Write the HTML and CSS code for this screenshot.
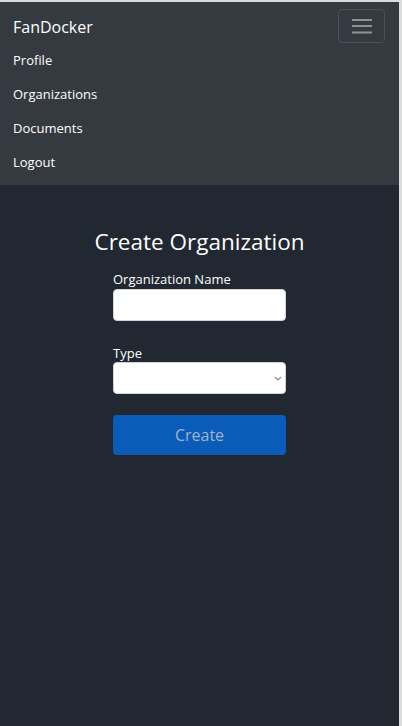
FILE: index.html
```html
<!DOCTYPE html>
<html lang="en">
<head>
<meta charset="utf-8">
<title>FanDocker</title>
<link rel="stylesheet" href="styles.css">
</head>
<body>
<div class="frame">
  <nav class="navbar">
    <div class="nav-top">
      <a class="brand" href="#">FanDocker</a>
      <button class="toggler" type="button" aria-label="Toggle navigation">
        <svg width="22" height="16" viewBox="0 0 22 16"><g stroke="#8e9297" stroke-width="2"><line x1="1" y1="2" x2="21" y2="2"/><line x1="1" y1="8" x2="21" y2="8"/><line x1="1" y1="14.5" x2="21" y2="14.5"/></g></svg>
      </button>
    </div>
    <ul class="nav-links">
      <li><a href="#">Profile</a></li>
      <li><a href="#">Organizations</a></li>
      <li><a href="#">Documents</a></li>
      <li><a href="#">Logout</a></li>
    </ul>
  </nav>
  <main class="content">
    <h1 class="title">Create Organization</h1>
    <form class="form">
      <label class="label" for="orgname">Organization Name</label>
      <input class="field" id="orgname" type="text">
      <label class="label label-type" for="type">Type</label>
      <div class="select-wrap">
        <select class="field select" id="type"><option></option></select>
        <svg class="chev" width="8" height="5" viewBox="0 0 8 5"><path d="M1 1l3 3 3-3" fill="none" stroke="#8a8a8a" stroke-width="1.2"/></svg>
      </div>
      <button class="btn" type="button" disabled>Create</button>
    </form>
  </main>
</div>
</body>
</html>
```
FILE: styles.css
```css
html, body {
  margin: 0;
  padding: 0;
  height: 100%;
}
body {
  font-family: "Open Sans", "Noto Sans", sans-serif;
  background: #212831;
}
.frame {
  box-sizing: border-box;
  min-height: 100%;
  border-top: 2px solid #dcdcdc;
  border-right: 3px solid #dcdcdc;
  background: #212831;
  display: flex;
  flex-direction: column;
}
.navbar {
  background: #343a40;
  padding: 7px 14px 6px 13px;
}
.nav-top {
  display: flex;
  justify-content: space-between;
  align-items: center;
  height: 34px;
}
.brand {
  color: #fff;
  text-decoration: none;
  font-size: 16px;
  line-height: 34px;
  padding-top: 2px;
}
.toggler {
  width: 47px;
  height: 34px;
  box-sizing: border-box;
  background: transparent;
  border: 1px solid #4a5057;
  border-radius: 4px;
  display: flex;
  align-items: center;
  justify-content: center;
  padding: 0;
}
.nav-links {
  list-style: none;
  margin: 0;
  padding: 0;
}
.nav-links li {
  height: 34px;
  display: flex;
  align-items: center;
}
.nav-links a {
  color: #fff;
  text-decoration: none;
  font-size: 13px;
}
.content {
  flex: 1;
  display: flex;
  flex-direction: column;
  align-items: center;
  padding-top: 42px;
}
.title {
  margin: 0;
  color: #fff;
  font-weight: 400;
  font-size: 22.5px;
  line-height: 29px;
}
.form {
  width: 173px;
  display: flex;
  flex-direction: column;
  margin-top: 15px;
}
.label {
  color: #fff;
  font-size: 13px;
  line-height: 17px;
  margin-bottom: 1px;
}
.label-type {
  margin-top: 24px;
  margin-bottom: 0;
}
.field {
  box-sizing: border-box;
  width: 100%;
  height: 32px;
  border: 1px solid #ced4da;
  border-radius: 4px;
  background: #fff;
  margin: 0;
  font-family: inherit;
}
.select-wrap {
  position: relative;
}
.select {
  appearance: none;
  -webkit-appearance: none;
  display: block;
}
.chev {
  position: absolute;
  right: 4px;
  top: 14px;
}
.btn {
  margin-top: 21px;
  height: 40px;
  border: none;
  border-radius: 4px;
  background: #0b5cb8;
  color: #9fb3cc;
  font-family: inherit;
  font-size: 16px;
  padding: 0;
}
```
